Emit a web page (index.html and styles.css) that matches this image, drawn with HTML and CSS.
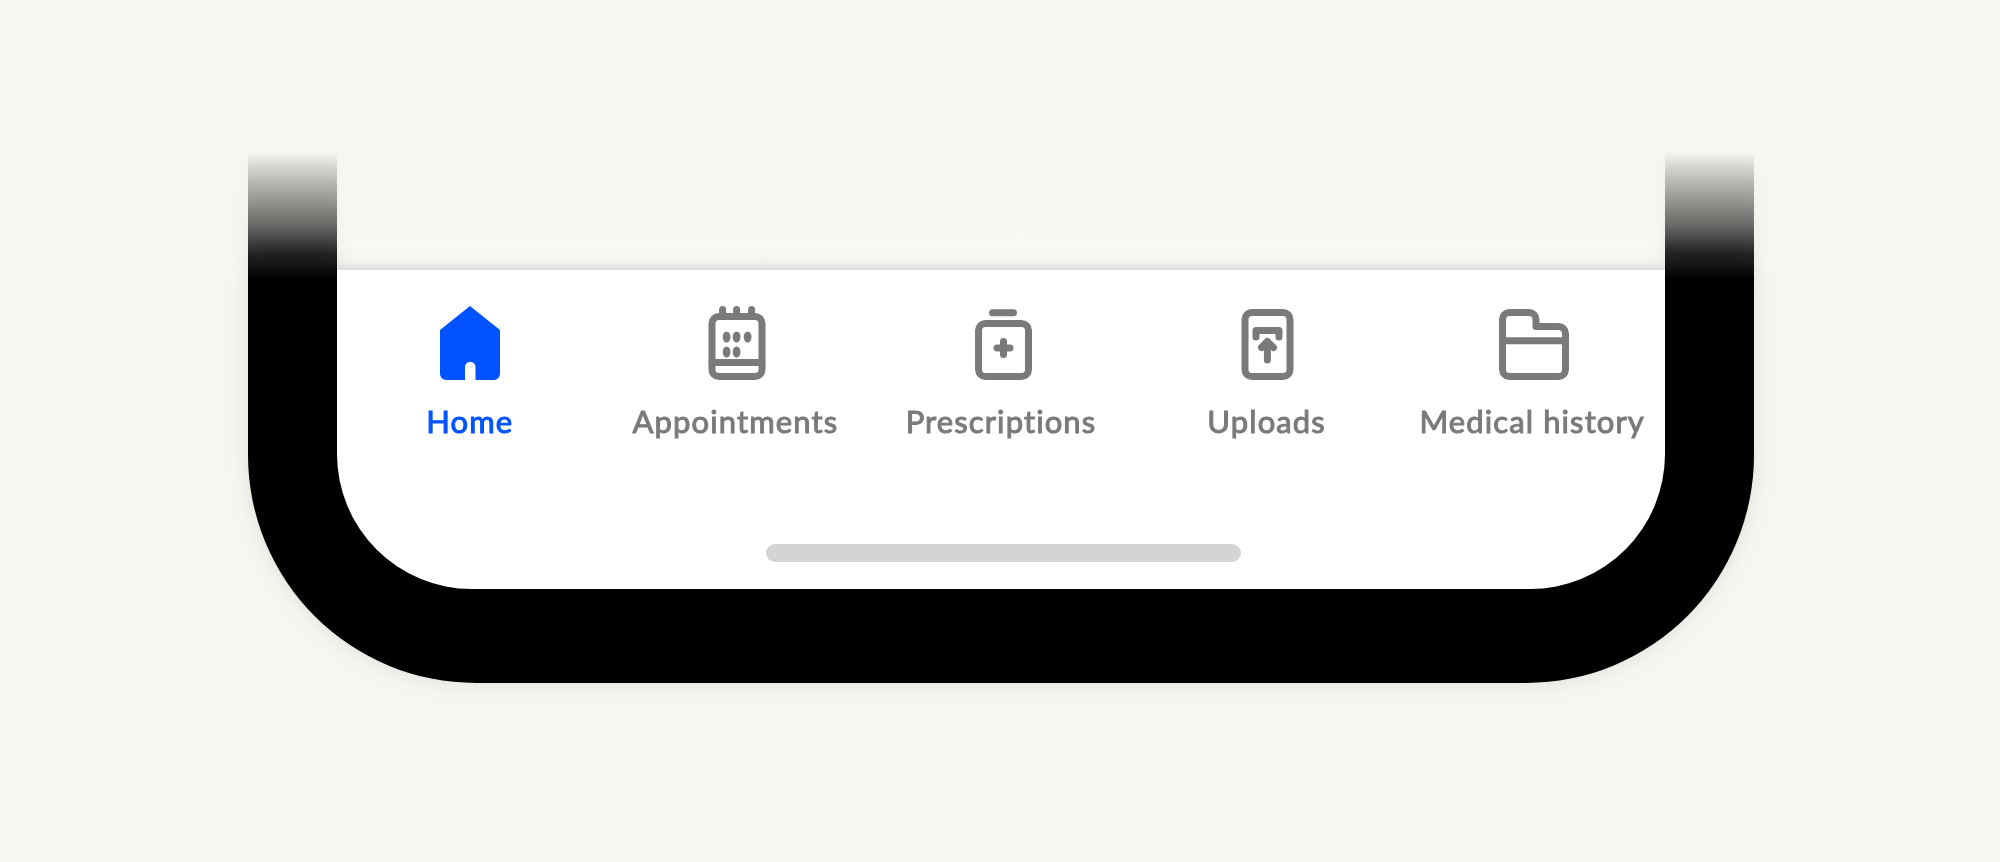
FILE: index.html
```html
<!DOCTYPE html>
<html lang="en">
<head>
<meta charset="utf-8">
<title>Tab bar</title>
<link rel="stylesheet" href="styles.css">
</head>
<body>
<div class="device">
  <div class="upper">
    <div class="rail"></div>
    <div class="content-fade"></div>
    <div class="rail"></div>
  </div>
  <div class="lower">
    <div class="screen">
      <nav class="tabs">
        <a class="tab tab-active">
          <svg class="icon" viewBox="0 0 80 80"><path class="solid" d="M40 3 70 27V71a6 6 0 0 1-6 6H45.5V64a5.25 5.25 0 0 0-10.5 0V77H16a6 6 0 0 1-6-6V27Z"/></svg>
          <span class="label">Home</span>
        </a>
        <a class="tab">
          <svg class="icon" viewBox="0 0 80 80">
            <rect class="line" x="17" y="13.5" width="50" height="60" rx="7"/>
            <path class="line" d="M27.6 6.5V13M41.6 6.5V13M56.6 6.5V13M17 59.5H67"/>
            <ellipse class="solid" cx="31.6" cy="34" rx="3.9" ry="5.5"/>
            <ellipse class="solid" cx="41.6" cy="34" rx="3.9" ry="5.5"/>
            <ellipse class="solid" cx="52.6" cy="34" rx="3.9" ry="5.5"/>
            <ellipse class="solid" cx="31.6" cy="49" rx="3.9" ry="5.5"/>
            <ellipse class="solid" cx="41.6" cy="49" rx="3.9" ry="5.5"/>
          </svg>
          <span class="label">Appointments</span>
        </a>
        <a class="tab">
          <svg class="icon" viewBox="0 0 80 80">
            <rect class="line" x="17.5" y="20.5" width="50" height="53" rx="7"/>
            <path class="line" d="M31.5 9.75H52.5M42.5 38.5V51.5M36 45H49"/>
          </svg>
          <span class="label">Prescriptions</span>
        </a>
        <a class="tab">
          <svg class="icon" viewBox="0 0 80 80">
            <rect class="line" x="18" y="9.5" width="45" height="64" rx="7"/>
            <path class="line" d="M29 34V27.5H52V34M40.4 57V39M34.5 44.5 40.4 38.5 46.5 44.5"/>
          </svg>
          <span class="label">Uploads</span>
        </a>
        <a class="tab">
          <svg class="icon" viewBox="0 0 80 80">
            <path class="line" d="M17.5 9.5H37a7 7 0 0 1 7 7V23.5H66.5a7 7 0 0 1 7 7V66.5a7 7 0 0 1-7 7H17.5a7 7 0 0 1-7-7V16.5a7 7 0 0 1 7-7ZM10.5 37.7H73.5"/>
          </svg>
          <span class="label">Medical history</span>
        </a>
      </nav>
      <div class="home-bar"></div>
    </div>
  </div>
</div>
</body>
</html>
```
FILE: styles.css
```css
* {
  box-sizing: border-box;
}

html,
body {
  margin: 0;
  height: 862px;
  overflow: hidden;
  background: #f6f7f1;
}

body {
  padding: 152px 246px 0 248px;
}

.device {
  display: flex;
  flex-direction: column;
}

.upper {
  display: flex;
  height: 118px;
}

.rail {
  flex: 0 0 89px;
  background: linear-gradient(to bottom, rgba(0, 0, 0, 0) 0, rgba(0, 0, 0, 0.12) 12%, rgba(0, 0, 0, 0.3) 32%, rgba(0, 0, 0, 0.56) 62%, rgba(0, 0, 0, 0.84) 85%, rgba(0, 0, 0, 0.94) 100%);
  filter: drop-shadow(0 0 8px rgba(0, 0, 0, 0.07));
}

.content-fade {
  flex: 1;
  background: linear-gradient(to bottom, #f6f7f1, #f8f8f5);
}

.lower {
  padding: 0 89px 94px;
  background: linear-gradient(to bottom, #0f0f0f, #000 10px);
  border-radius: 0 0 228px 228px;
  filter: drop-shadow(0 0 10px rgba(0, 0, 0, 0.1));
}

.screen {
  height: 319px;
  padding-top: 33px;
  background: #fff;
  border-radius: 0 0 135px 135px;
  box-shadow: 0 -2px 9px rgba(0, 0, 0, 0.1);
}

.tabs {
  display: grid;
  grid-template-columns: repeat(5, 1fr);
}

.tab {
  display: flex;
  flex-direction: column;
  align-items: center;
  color: #7a7a7a;
}

.tab-active {
  color: #0253ff;
}

.icon {
  display: block;
  width: 80px;
  height: 80px;
}

.solid {
  fill: currentColor;
}

.line {
  fill: none;
  stroke: currentColor;
  stroke-width: 7;
  stroke-linecap: round;
  stroke-linejoin: round;
}

.label {
  margin-top: 18px;
  font-family: "Lato", "Liberation Sans", sans-serif;
  font-size: 31px;
  font-weight: 400;
  letter-spacing: 1.1px;
  -webkit-text-stroke: 1px currentColor;
  line-height: 40px;
  white-space: nowrap;
  font-variant-ligatures: none;
}

.home-bar {
  width: 475px;
  height: 18px;
  margin: 103px 0 0 429px;
  background: #d4d4d4;
  border-radius: 9px;
}
```
